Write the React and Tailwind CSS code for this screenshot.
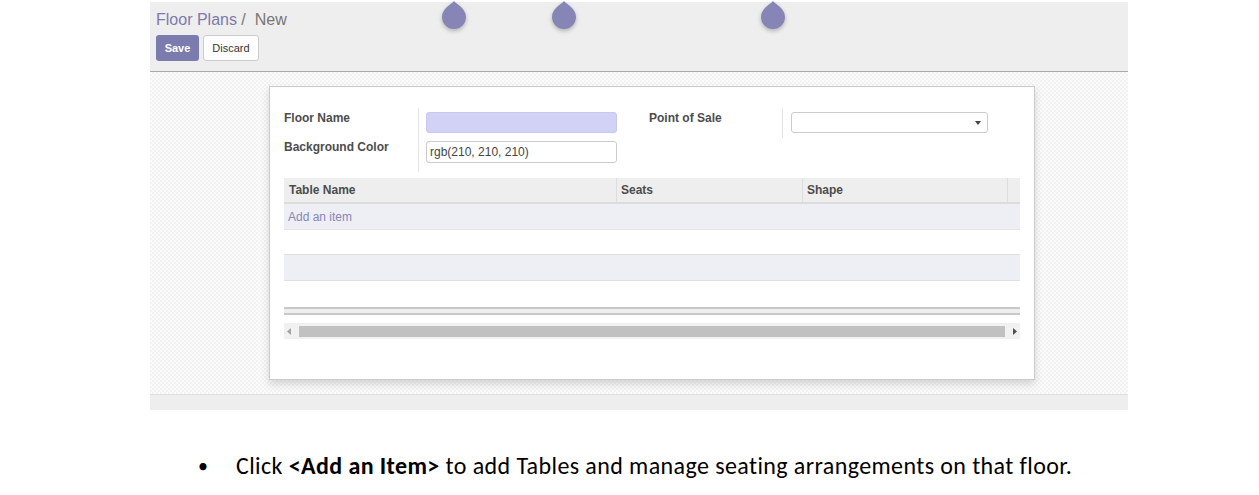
const ui = { fontFamily: '"Liberation Sans", Arial, sans-serif' }

function Pin() {
  return (
    <svg width="28" height="30" viewBox="0 0 28 30" className="drop-shadow-[0_2px_2px_rgba(0,0,0,0.25)]">
      <path d="M14 1 C12 4 2 8 2 17 a12 12 0 0 0 24 0 C26 8 16 4 14 1 Z" fill="#8685b5" />
    </svg>
  )
}

export default function App() {
  return (
    <div className="min-h-[495px] w-[1259px] bg-white" style={ui}>
      <div className="ml-[150px] w-[978px] pt-[2px]">
        {/* control panel */}
        <div className="relative h-[70px] border-b border-[#a9a9a9] bg-[#efeeee] px-[6px] pt-[9px]">
          <div className="text-[16px] leading-[18px]">
            <span className="text-[#7c7bad]">Floor Plans</span>
            <span className="text-[#777]"> /&nbsp; New</span>
          </div>
          <div className="mt-[6px] flex gap-[4px]">
            <button className="h-[26px] w-[43px] rounded-[3px] bg-[#7c7bad] text-[11px] font-bold text-white">Save</button>
            <button className="h-[26px] w-[56px] rounded-[3px] border border-[#ccc] bg-white text-[11px] text-[#333]">Discard</button>
          </div>
          <div className="absolute left-[290px] top-[-2px]"><Pin /></div>
          <div className="absolute left-[400px] top-[-2px]"><Pin /></div>
          <div className="absolute left-[609px] top-[-2px]"><Pin /></div>
        </div>

        {/* form view */}
        <div className="h-[322px] bg-[repeating-conic-gradient(#f2f2f2_0_25%,#fbfbfb_0_50%)] bg-[length:4px_4px] pl-[119px] pt-[14px]">
          <div className="h-[294px] w-[766px] border border-[#ccc] bg-white px-[14px] pt-[21px] shadow-[0_4px_8px_rgba(0,0,0,0.15)]">
            <div className="flex">
              <div className="w-[135px] border-r border-[#e4e4e4] pb-[6px] text-[12px] font-bold text-[#4c4c4c]">
                <div className="h-[29px] pt-[1px]">Floor Name</div>
                <div className="h-[29px] pt-[1px]">Background Color</div>
              </div>
              <div className="w-[191px] pl-[7px] pt-[4px]">
                <div className="h-[21px] w-[191px] rounded-[3px] border border-[#c8c8f0] bg-[#d2d2f7]" />
                <div className="mt-[8px] flex h-[22px] w-[191px] items-center rounded-[3px] border border-[#ccc] px-[3px] text-[12px] text-[#444]">rgb(210, 210, 210)</div>
              </div>
              <div className="ml-[39px] h-[30px] w-[134px] border-r border-[#e4e4e4] text-[12px] font-bold text-[#4c4c4c]">
                <div className="pt-[1px]">Point of Sale</div>
              </div>
              <div className="pl-[8px] pt-[4px]">
                <div className="flex h-[21px] w-[197px] items-center justify-end rounded-[3px] border border-[#ccc] pr-[6px]">
                  <svg width="6" height="4" viewBox="0 0 6 4"><path d="M0 0 H6 L3 4 Z" fill="#444" /></svg>
                </div>
              </div>
            </div>

            {/* one2many list */}
            <div className="mt-[6px] w-[736px] text-[12px]">
              <div className="flex h-[26px] items-center border-b-2 border-[#dcdcdc] bg-[#eeeeee] font-bold text-[#4c4c4c]">
                <div className="w-[333px] border-r border-[#ddd] pl-[5px] leading-[24px]">Table Name</div>
                <div className="w-[186px] border-r border-[#ddd] pl-[4px] leading-[24px]">Seats</div>
                <div className="w-[205px] border-r border-[#ddd] pl-[4px] leading-[24px]">Shape</div>
              </div>
              <div className="flex h-[26px] items-center border-b border-[#e6e6e6] bg-[#eeeef5] pl-[4px] text-[#8786b8]">Add an item</div>
              <div className="h-[25px] border-b border-[#e0e0e0] bg-white" />
              <div className="h-[26px] border-b border-[#e0e0e0] bg-[#eeeef5]" />
              <div className="h-[26px] bg-white" />
              <div className="h-[8px] border-y-2 border-[#c8c8c8] bg-[#eeeeee]" />
              <div className="mt-[8px] flex h-[16px] items-center bg-[#f1f1f1] px-[3px]">
                <svg width="4" height="7" viewBox="0 0 4 7"><path d="M4 0 V7 L0 3.5 Z" fill="#a3a3a3" /></svg>
                <div className="ml-[8px] h-[11px] flex-1 bg-[#c1c1c1]" />
                <svg className="ml-[8px]" width="4" height="7" viewBox="0 0 4 7"><path d="M0 0 V7 L4 3.5 Z" fill="#505050" /></svg>
              </div>
            </div>
          </div>
        </div>
        <div className="h-[16px] border-t border-[#e0e0e0] bg-[#efeeee]" />
      </div>

      <ul className="ml-[198px] mt-[41px] text-[24px] leading-[30px] text-black" style={{ fontFamily: 'Carlito, Lato, "Open Sans", sans-serif' }}>
        <li className="flex items-center">
          <span className="w-[38px] text-[20px]">•</span>
          <span className="tracking-[0.4px]">Click <b>&lt;Add an Item&gt;</b> to add Tables and manage seating arrangements on that floor.</span>
        </li>
      </ul>
    </div>
  )
}
